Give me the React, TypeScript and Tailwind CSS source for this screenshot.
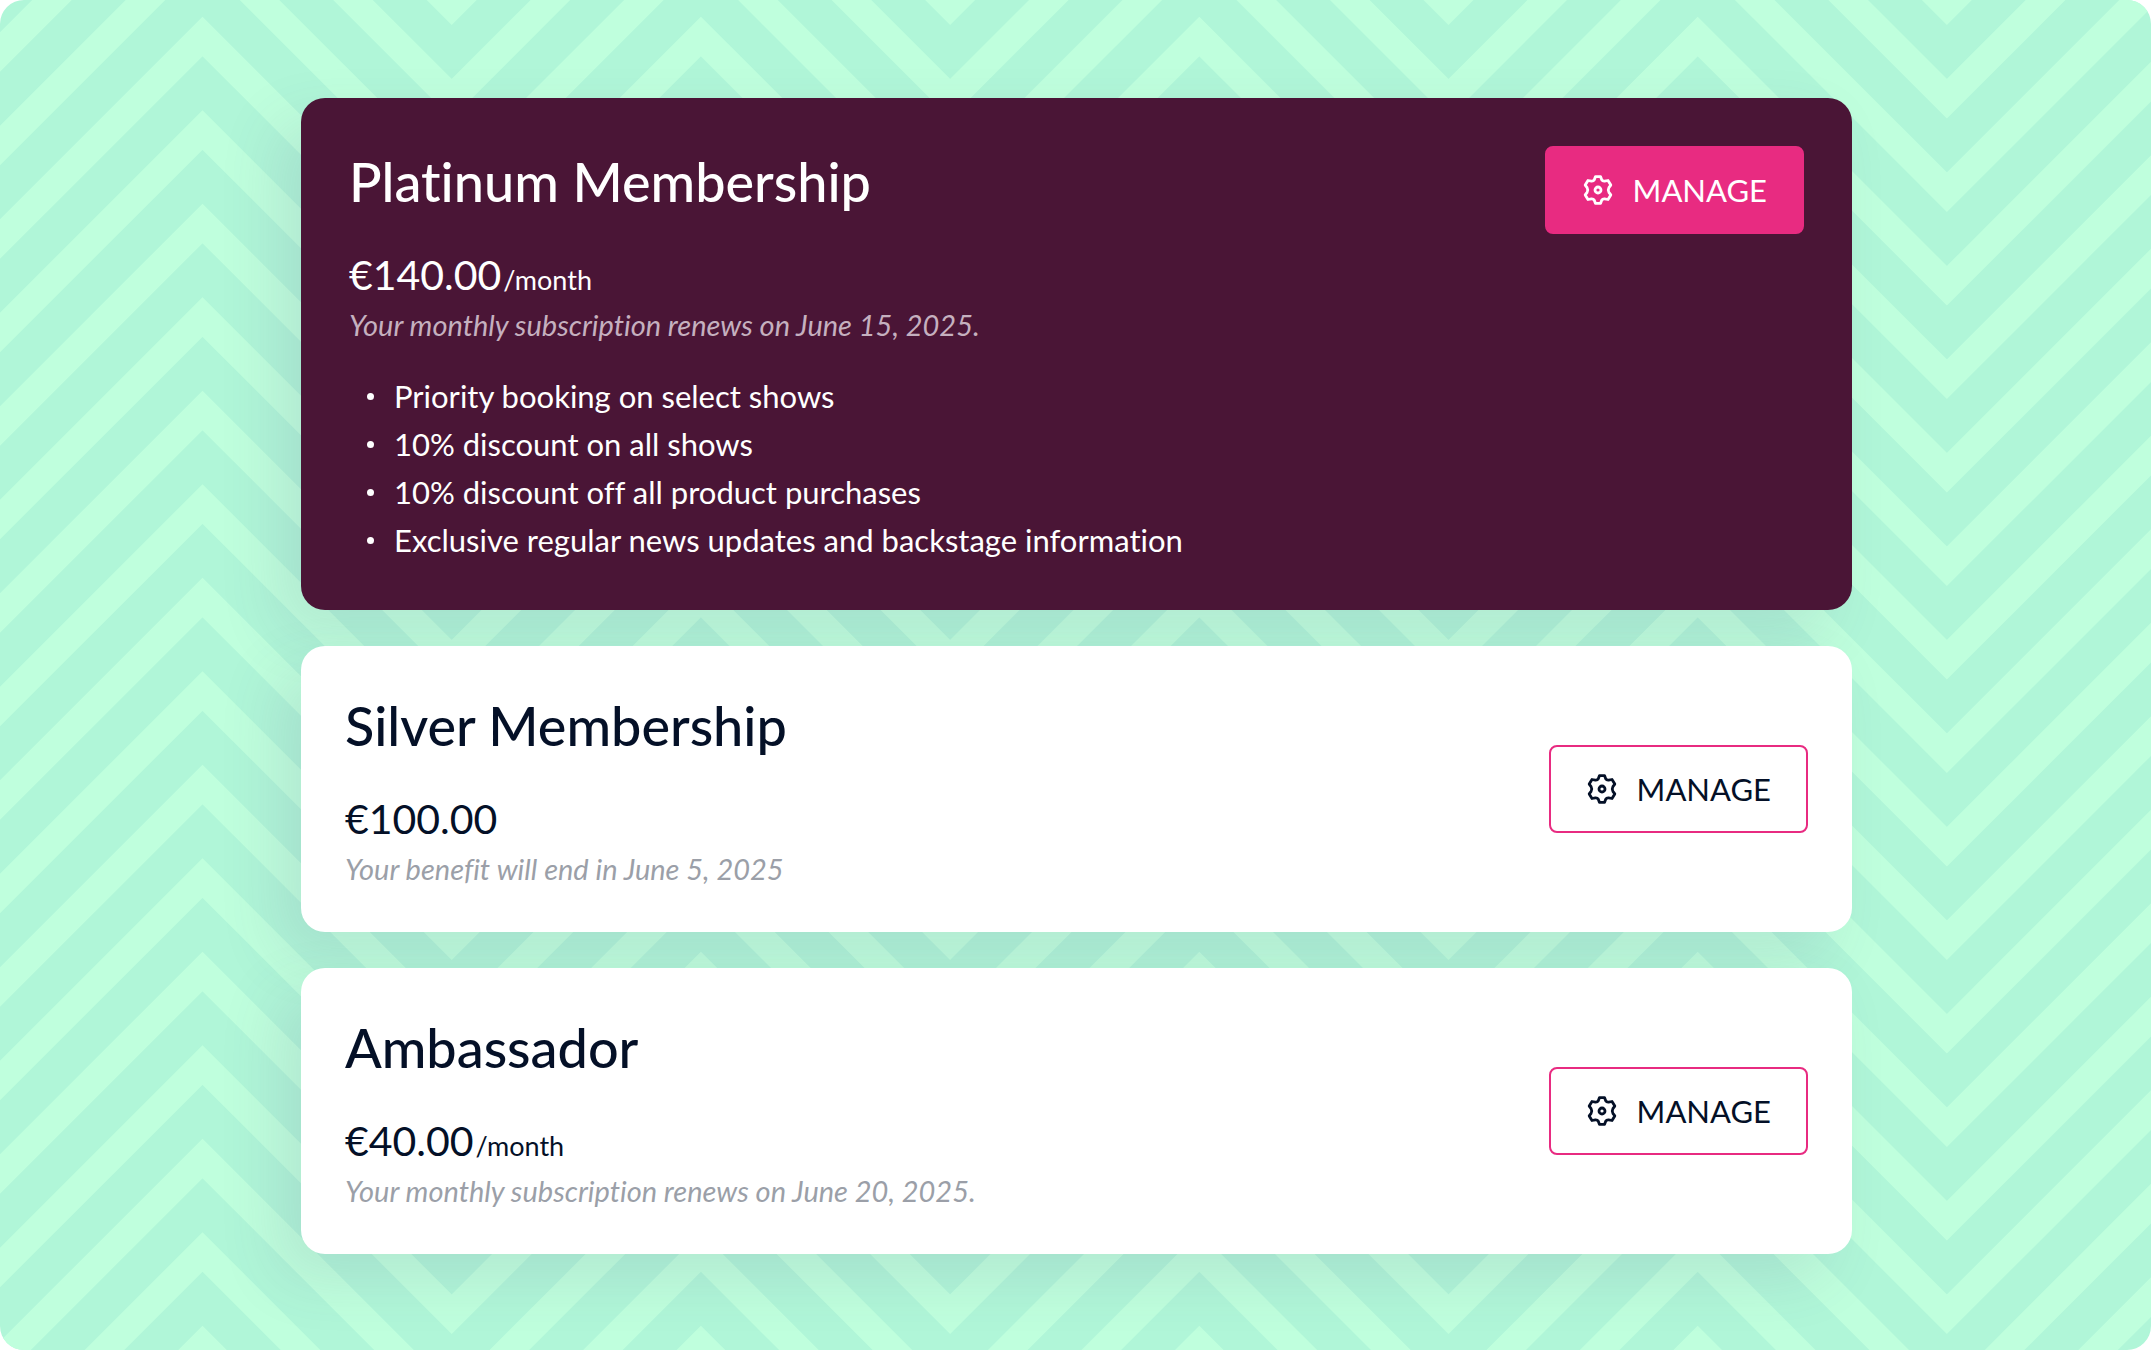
import React from 'react';
import { clsx } from 'clsx';

interface Membership {
  name: string;
  price: string;
  interval?: string;
  note: string;
  perks?: string[];
  featured?: boolean;
}

const memberships: Membership[] = [
  {
    name: 'Platinum Membership',
    price: '€140.00',
    interval: '/month',
    note: 'Your monthly subscription renews on June 15, 2025.',
    perks: [
      'Priority booking on select shows',
      '10% discount on all shows',
      '10% discount off all product purchases',
      'Exclusive regular news updates and backstage information',
    ],
    featured: true,
  },
  {
    name: 'Silver Membership',
    price: '€100.00',
    note: 'Your benefit will end in June 5, 2025',
  },
  {
    name: 'Ambassador',
    price: '€40.00',
    interval: '/month',
    note: 'Your monthly subscription renews on June 20, 2025.',
  },
];

// One zigzag line: peaks every 498.4 units, starting left of the canvas
const zigzag = (peakY: number) =>
  Array.from({ length: 11 }, (_, i) => {
    const x = -295.9 + i * 249.2;
    const y = i % 2 === 0 ? peakY : peakY + 249.2;
    return `${x.toFixed(1)},${y.toFixed(1)}`;
  }).join(' ');

const ChevronBackground: React.FC = () => (
  <svg
    className="absolute inset-0 h-full w-full"
    viewBox="0 0 2151 1350"
    preserveAspectRatio="xMidYMid slice"
    aria-hidden="true"
  >
    <g fill="none" stroke="#bfffdd" strokeWidth="28" strokeMiterlimit="4">
      {Array.from({ length: 20 }, (_, i) => (
        <polyline key={i} points={zigzag(36.5 + (i - 4) * 93.5)} />
      ))}
    </g>
  </svg>
);

const GearIcon: React.FC = () => (
  <svg
    className="h-8 w-8 shrink-0"
    viewBox="-16 -16 32 32"
    fill="none"
    stroke="currentColor"
    strokeWidth="2.8"
    strokeLinejoin="round"
    aria-hidden="true"
  >
    <path d="M-2.6-13.3H2.6L3.7-10.2Q4.6-8.6 6.6-8.8L10-9.5 12.8-4.9 10.9-2.3Q9.6 0 10.9 2.3L12.8 4.9 10 9.5 6.6 8.8Q4.6 8.6 3.7 10.2L2.6 13.3H-2.6L-3.7 10.2Q-4.6 8.6-6.6 8.8L-10 9.5-12.8 4.9-10.9 2.3Q-9.6 0-10.9-2.3L-12.8-4.9-10-9.5-6.6-8.8Q-4.6-8.6-3.7-10.2Z" />
    <circle r="3" />
  </svg>
);

const ManageButton: React.FC<{ featured?: boolean }> = ({ featured }) => (
  <button
    type="button"
    className={clsx(
      'flex h-[88px] shrink-0 items-center gap-[19px] rounded-lg border-2 border-[#e82b81] px-[35px] text-[31px] leading-10',
      featured ? 'self-start bg-[#e82b81] text-white' : 'self-center bg-white text-[#041027]'
    )}
  >
    <GearIcon />
    MANAGE
  </button>
);

const MembershipCard: React.FC<{ membership: Membership }> = ({ membership }) => {
  const { name, price, interval, note, perks, featured } = membership;

  return (
    <section
      className={clsx(
        'flex justify-between rounded-3xl shadow-[-24px_24px_60px_rgba(80,70,120,0.12)]',
        featured ? 'bg-[#4a1536] px-12 pt-12 pb-[46px] text-white' : 'bg-white p-11 text-[#041027]'
      )}
    >
      <div>
        <h2 className="text-[54px] font-medium leading-[71px]">{name}</h2>
        <p className="mt-7 text-[41px] leading-[60px]">
          {price}
          {interval && <span className="ml-0.5 text-[27px] leading-none">{interval}</span>}
        </p>
        <p
          className={clsx(
            'text-[29px] italic leading-[39px]',
            featured ? 'text-[#c5b0bf]' : 'text-[#9b9fa8]'
          )}
        >
          {note}
        </p>
        {perks && (
          <ul className="mt-7 text-[31px] leading-[48px]">
            {perks.map((perk) => (
              <li key={perk} className="flex items-center gap-5 pl-[18px]">
                <span className="h-[7px] w-[7px] shrink-0 rounded-full bg-white" />
                {perk}
              </li>
            ))}
          </ul>
        )}
      </div>
      <ManageButton featured={featured} />
    </section>
  );
};

const App: React.FC = () => {
  return (
    <div className="min-h-screen bg-white font-['Lato',sans-serif] [font-variant-ligatures:none]">
      <main className="relative min-h-screen overflow-hidden rounded-3xl bg-[#b0f6d8]">
        <ChevronBackground />
        <div className="relative flex flex-col gap-9 pt-[98px] pr-[299px] pb-20 pl-[301px]">
          {memberships.map((membership) => (
            <MembershipCard key={membership.name} membership={membership} />
          ))}
        </div>
      </main>
    </div>
  );
};

export default App;
